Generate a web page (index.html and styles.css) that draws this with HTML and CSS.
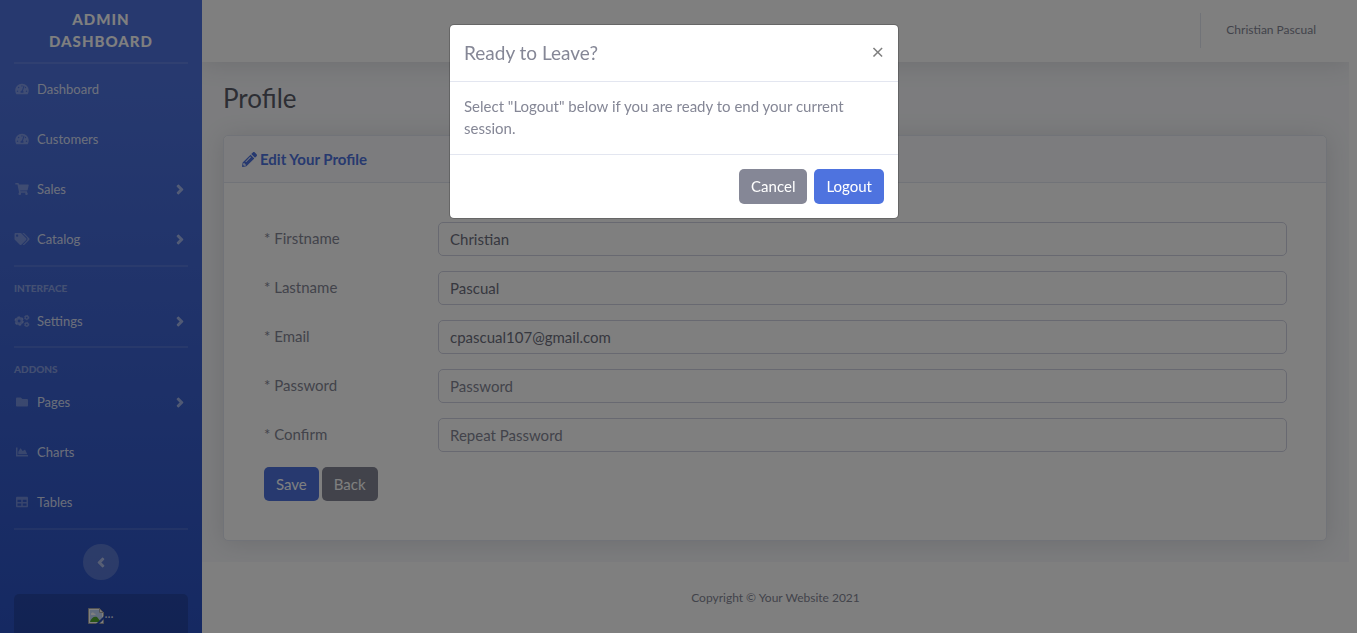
FILE: index.html
```html
<!DOCTYPE html>
<html lang="en">
<head>
<meta charset="utf-8">
<meta name="viewport" content="width=device-width, initial-scale=1">
<title>Profile</title>
<link rel="stylesheet" href="styles.css">
</head>
<body>
<svg class="sprite" aria-hidden="true">
  <symbol id="gauge" viewBox="0 0 576 512"><path d="M288 32C128.94 32 0 160.94 0 320c0 52.8 14.25 102.26 39.06 144.8 5.61 9.62 16.3 15.2 27.44 15.2h443c11.14 0 21.83-5.58 27.44-15.2C561.75 422.26 576 372.8 576 320c0-159.06-128.94-288-288-288zm0 64c14.71 0 26.58 10.13 30.32 23.65-1.11 2.26-2.64 4.23-3.45 6.67l-9.22 27.67c-5.13 3.49-10.97 6.01-17.64 6.01-17.67 0-32-14.33-32-32S270.33 96 288 96zM96 384c-17.67 0-32-14.33-32-32s14.33-32 32-32 32 14.33 32 32-14.33 32-32 32zm48-160c-17.67 0-32-14.33-32-32s14.33-32 32-32 32 14.33 32 32-14.33 32-32 32zm246.77-72.41l-61.33 184C343.13 347.33 352 364.54 352 384c0 11.72-3.38 22.55-8.88 32H232.88c-5.5-9.45-8.88-20.28-8.88-32 0-33.94 26.5-61.43 59.9-63.59l61.34-184.01c4.17-12.56 17.73-19.45 30.36-15.17 12.57 4.19 19.35 17.79 15.17 30.36zm14.66 57.2l15.52-46.55c3.47-1.29 7.13-2.23 11.05-2.23 17.67 0 32 14.33 32 32s-14.33 32-32 32c-11.38-.01-20.89-6.28-26.57-15.22zM480 384c-17.67 0-32-14.33-32-32s14.33-32 32-32 32 14.33 32 32-14.33 32-32 32z"/></symbol>
  <symbol id="cart" viewBox="0 0 576 512"><path d="M528.12 301.319l47.273-208C578.806 78.301 567.391 64 551.99 64H159.208l-9.166-44.81C147.758 8.021 137.93 0 126.529 0H24C10.745 0 0 10.745 0 24v16c0 13.255 10.745 24 24 24h69.883l70.248 343.435C147.325 417.1 136 435.222 136 456c0 30.928 25.072 56 56 56s56-25.072 56-56c0-15.674-6.447-29.835-16.824-40h209.647C430.447 426.165 424 440.326 424 456c0 30.928 25.072 56 56 56s56-25.072 56-56c0-22.172-12.888-41.332-31.579-50.405l5.517-24.276c3.413-15.018-8.002-29.319-23.403-29.319H218.117l-6.545-32h293.145c11.206 0 20.92-7.754 23.403-18.681z"/></symbol>
  <symbol id="tags" viewBox="0 0 640 512"><path d="M497.941 225.941L286.059 14.059A48 48 0 0 0 252.118 0H48C21.49 0 0 21.49 0 48v204.118a48 48 0 0 0 14.059 33.941l211.882 211.882c18.744 18.745 49.136 18.746 67.882 0l204.118-204.118c18.745-18.745 18.745-49.137 0-67.882zM112 160c-26.51 0-48-21.49-48-48s21.49-48 48-48 48 21.49 48 48-21.49 48-48 48zm513.941 133.823L421.823 497.941c-18.745 18.745-49.137 18.745-67.882 0l-.36-.36L527.64 323.522c16.999-16.999 26.36-39.6 26.36-63.64s-9.362-46.641-26.36-63.64L331.397 0h48.721a48 48 0 0 1 33.941 14.059l211.882 211.882c18.745 18.745 18.745 49.137 0 67.882z"/></symbol>
  <symbol id="cogs" viewBox="0 0 640 512"><g fill="none" stroke="currentColor"><circle cx="198" cy="256" r="116" stroke-width="108"/><circle cx="198" cy="256" r="180" stroke-width="44" stroke-dasharray="104 84.5"/><circle cx="520" cy="108" r="66" stroke-width="60"/><circle cx="520" cy="108" r="100" stroke-width="26" stroke-dasharray="56 48.7"/><circle cx="520" cy="404" r="66" stroke-width="60"/><circle cx="520" cy="404" r="100" stroke-width="26" stroke-dasharray="56 48.7"/></g></symbol>
  <symbol id="folder" viewBox="0 0 512 512"><path d="M464 128H272l-64-64H48C21.49 64 0 85.49 0 112v288c0 26.51 21.49 48 48 48h416c26.51 0 48-21.49 48-48V176c0-26.51-21.49-48-48-48z"/></symbol>
  <symbol id="area" viewBox="0 0 512 512"><path d="M500 384c6.6 0 12 5.4 12 12v40c0 6.6-5.4 12-12 12H12c-6.6 0-12-5.4-12-12V76c0-6.6 5.4-12 12-12h40c6.6 0 12 5.4 12 12v308h436zM372.7 159.5L288 216l-85.3-113.7c-5.1-6.8-15.5-6.3-19.9 1L96 248v104h384l-89.9-187.8c-3.2-6.5-11.4-8.7-17.4-4.7z"/></symbol>
  <symbol id="table" viewBox="0 0 512 512"><path d="M464 32H48C21.49 32 0 53.49 0 80v352c0 26.51 21.49 48 48 48h416c26.51 0 48-21.49 48-48V80c0-26.51-21.49-48-48-48zM224 416H64v-96h160v96zm0-160H64v-96h160v96zm224 160H288v-96h160v96zm0-160H288v-96h160v96z"/></symbol>
  <symbol id="angle" viewBox="0 0 256 512"><path stroke="currentColor" stroke-width="20" d="M224.3 273l-136 136c-9.4 9.4-24.6 9.4-33.9 0l-22.6-22.6c-9.4-9.4-9.4-24.6 0-33.9l96.4-96.4-96.4-96.4c-9.4-9.4-9.4-24.6 0-33.9L54.3 103c9.4-9.4 24.6-9.4 33.9 0l136 136c9.5 9.4 9.5 24.6.1 34z"/></symbol>
  <symbol id="pencil" viewBox="0 0 512 512"><path d="M497.9 142.1l-46.1 46.1c-4.7 4.7-12.3 4.7-17 0l-111-111c-4.7-4.7-4.7-12.3 0-17l46.1-46.1c18.7-18.7 49.1-18.7 67.9 0l60.1 60.1c18.8 18.7 18.8 49.1 0 67.9zM284.2 99.8L21.6 362.4.4 483.9c-2.9 16.4 11.4 30.6 27.8 27.8l121.5-21.3 262.6-262.6c4.7-4.7 4.7-12.3 0-17l-111-111c-4.8-4.7-12.4-4.7-17.1 0zM124.1 339.9c-5.5-5.5-5.5-14.3 0-19.8l154-154c5.5-5.5 14.3-5.5 19.8 0s5.5 14.3 0 19.8l-154 154c-5.5 5.5-14.3 5.5-19.8 0zM88 424h48v36.3l-64.5 11.3-31.1-31.1L51.7 376H88v48z"/></symbol>
</svg>

<div class="wrapper">
  <nav class="sidebar">
    <a class="brand" href="#">Admin Dashboard</a>
    <hr class="divider">
    <ul class="nav nav-main">
      <li><a class="nav-link" href="#"><svg class="icon"><use href="#gauge"/></svg><span>Dashboard</span></a></li>
      <li><a class="nav-link" href="#"><svg class="icon"><use href="#gauge"/></svg><span>Customers</span></a></li>
      <li><a class="nav-link" href="#"><svg class="icon"><use href="#cart"/></svg><span>Sales</span><svg class="arrow"><use href="#angle"/></svg></a></li>
      <li><a class="nav-link" href="#"><svg class="icon"><use href="#tags"/></svg><span>Catalog</span><svg class="arrow"><use href="#angle"/></svg></a></li>
    </ul>
    <hr class="divider">
    <div class="heading">Interface</div>
    <ul class="nav">
      <li><a class="nav-link" href="#"><svg class="icon"><use href="#cogs"/></svg><span>Settings</span><svg class="arrow"><use href="#angle"/></svg></a></li>
    </ul>
    <hr class="divider">
    <div class="heading">Addons</div>
    <ul class="nav nav-last">
      <li><a class="nav-link" href="#"><svg class="icon"><use href="#folder"/></svg><span>Pages</span><svg class="arrow"><use href="#angle"/></svg></a></li>
      <li><a class="nav-link" href="#"><svg class="icon"><use href="#area"/></svg><span>Charts</span></a></li>
      <li><a class="nav-link" href="#"><svg class="icon"><use href="#table"/></svg><span>Tables</span></a></li>
    </ul>
    <hr class="divider">
    <button class="toggle" type="button" aria-label="Collapse sidebar"><svg class="arrow arrow-left"><use href="#angle"/></svg></button>
    <div class="promo">
      <svg class="missing" viewBox="0 0 16 16" aria-hidden="true">
        <path d="M.5.5h11l4 4v11H.5z" fill="#fff" stroke="#a5a5a5"/>
        <path d="M2 2h9v3h3v9H2z" fill="#c3d9fa"/>
        <path d="M3 6c0-2 3-2 3-.5C8 5 8 7 7 7H3z" fill="#fff"/>
        <path d="M2 14c1-4 4-6 7-5l4 5z" fill="#4fa62f"/>
        <path d="M16 8L8 16h3l5-5z" fill="#2a4fb4"/>
        <path d="M11.500.5v4h4z" fill="#eee" stroke="#a5a5a5"/>
      </svg><span>...</span>
    </div>
  </nav>

  <div class="content">
    <header class="topbar">
      <a class="user" href="#">Christian Pascual</a>
    </header>
    <main class="main">
      <h1>Profile</h1>
      <section class="card">
        <h2 class="card-header"><svg class="pencil"><use href="#pencil"/></svg>Edit Your Profile</h2>
        <form class="form">
          <label for="first">* Firstname</label><input id="first" type="text" value="Christian">
          <label for="last">* Lastname</label><input id="last" type="text" value="Pascual">
          <label for="email">* Email</label><input id="email" type="email" value="cpascual107@gmail.com">
          <label for="pass">* Password</label><input id="pass" type="password" placeholder="Password">
          <label for="confirm">* Confirm</label><input id="confirm" type="password" placeholder="Repeat Password">
          <div class="actions">
            <button class="btn btn-primary" type="button">Save</button>
            <button class="btn btn-secondary" type="button">Back</button>
          </div>
        </form>
      </section>
    </main>
    <footer class="footer">Copyright © Your Website 2021</footer>
  </div>
</div>

<div class="backdrop">
  <div class="modal" role="dialog" aria-modal="true" aria-labelledby="modal-title">
    <div class="modal-header">
      <h5 id="modal-title">Ready to Leave?</h5>
      <button class="close" type="button" aria-label="Close">×</button>
    </div>
    <div class="modal-body">Select "Logout" below if you are ready to end your current session.</div>
    <div class="modal-footer">
      <button class="btn btn-secondary" type="button">Cancel</button>
      <a class="btn btn-primary" href="#">Logout</a>
    </div>
  </div>
</div>
</body>
</html>
```
FILE: styles.css
```css
* { box-sizing: border-box; }

body {
  margin: 0;
  padding-right: 8px;
  height: 100vh;
  overflow: hidden;
  background: #fff;
  color: #858796;
  font: 15px/22px Lato, "Open Sans", sans-serif;
}

a { color: inherit; text-decoration: none; }

.sprite { position: absolute; width: 0; height: 0; }

.icon, .arrow, .pencil { fill: currentColor; flex: none; }

.wrapper { display: flex; align-items: stretch; }

/* Sidebar */
.sidebar {
  flex: none;
  width: 202px;
  padding: 0 14px 60px;
  background: linear-gradient(180deg, #4e73df 10%, #224abe 100%);
}

.brand {
  display: block;
  padding: 8px 14px 10px;
  color: #fff;
  font-size: 15px;
  font-weight: 900;
  letter-spacing: 1px;
  text-align: center;
  text-transform: uppercase;
}

.divider {
  height: 2px;
  margin: 0;
  border: 0;
  background: rgba(255, 255, 255, .1);
}

.nav { margin: 0; padding: 0; list-style: none; }
.nav-main { padding-bottom: 1px; }
.nav-last { padding-bottom: 1px; }

.nav-link {
  display: flex;
  align-items: center;
  gap: 7px;
  height: 50px;
  color: rgba(255, 255, 255, .8);
  font-size: 13px;
}

.icon { width: 16px; height: 12px; color: rgba(255, 255, 255, .3); }
.arrow { width: 8px; height: 15px; margin-left: auto; margin-right: 4px; color: rgba(255, 255, 255, .5); }

.heading {
  padding: 15px 0 2px;
  color: rgba(255, 255, 255, .4);
  font-size: 10px;
  font-weight: 900;
  line-height: 12px;
  text-transform: uppercase;
}

.toggle {
  display: grid;
  place-items: center;
  width: 36px;
  height: 36px;
  margin: 14px auto 14px;
  padding: 0;
  border: 0;
  border-radius: 50%;
  background: rgba(255, 255, 255, .2);
}

.arrow-left { margin: 0; transform: rotate(180deg); }

.promo {
  display: flex;
  justify-content: center;
  align-items: flex-end;
  padding: 8px 14px 90px;
  border-radius: 5px;
  background: rgba(0, 0, 0, .15);
  color: rgba(255, 255, 255, .8);
  font-size: 13px;
}

.missing { width: 16px; height: 16px; }

/* Content */
.content { flex: 1; display: flex; flex-direction: column; min-width: 0; }

.topbar {
  display: flex;
  justify-content: flex-end;
  height: 62px;
  padding: 13px 33px 14px 14px;
  background: #fff;
  box-shadow: 0 2px 25px rgba(58, 59, 69, .15);
  clip-path: inset(0 0 -40px 0);
  position: relative;
}

.user {
  padding-left: 25px;
  border-left: 1px solid #e3e6f0;
  color: #858796;
  font-size: 12px;
  line-height: 34px;
}

.main {
  padding: 21px 22px 21px 21px;
  background: #f8f9fc;
  overflow: hidden;
}

h1 {
  margin: 0 0 22px;
  color: #5a5c69;
  font-size: 26px;
  font-weight: 400;
  line-height: 30px;
}

.card {
  border: 1px solid #e3e6f0;
  border-radius: 5px;
  background: #fff;
  box-shadow: 0 2px 25px rgba(58, 59, 69, .15);
}

.card-header {
  display: flex;
  align-items: center;
  gap: 3px;
  margin: 0;
  padding: 12px 18px;
  border-bottom: 1px solid #e3e6f0;
  border-radius: 5px 5px 0 0;
  background: #f8f9fc;
  color: #4e73df;
  font-size: 15px;
  font-weight: 700;
  line-height: 22px;
}

.pencil { width: 15px; height: 15px; }

.form {
  display: grid;
  grid-template-columns: 160px 1fr;
  gap: 15px 14px;
  padding: 39px 39px 39px 40px;
}

.form label { line-height: 32px; }

.form input {
  height: 34px;
  min-width: 0;
  padding: 0 11px;
  border: 1px solid #d1d3e2;
  border-radius: 5px;
  background: #fff;
  color: #6e707e;
  font: inherit;
}

.form input::placeholder { color: #858796; opacity: 1; }

.actions { grid-column: 1 / -1; display: flex; gap: 3px; }
.actions .btn { height: 34px; line-height: 32px; }

.btn {
  height: 35px;
  padding: 0 11px;
  border: 1px solid transparent;
  border-radius: 5px;
  color: #fff;
  font: inherit;
  line-height: 33px;
}

.btn-primary { background: #4e73df; }
.btn-secondary { background: #858796; }

.footer {
  padding: 29px 20px;
  font-size: 12px;
  line-height: 14px;
  text-align: center;
}

/* Logout dialog */
.backdrop {
  position: fixed;
  inset: 0;
  padding: 24px 9px 0 0;
  background: rgba(0, 0, 0, .5);
}

.modal {
  max-width: 450px;
  margin: 0 auto;
  border: 1px solid rgba(0, 0, 0, .2);
  border-radius: 5px;
  background: #fff;
  background-clip: padding-box;
}

.modal-header {
  display: flex;
  justify-content: space-between;
  padding: 14px;
  border-bottom: 1px solid #e3e6f0;
}

.modal-header h5 {
  margin: 0;
  font-size: 19px;
  font-weight: 400;
  line-height: 28px;
}

.close {
  height: 24px;
  padding: 0;
  border: 0;
  background: none;
  color: #7f7f7f;
  font: 22px/24px "Open Sans", sans-serif;
}

.modal-body { padding: 13px 14px 15px; }

.modal-footer {
  display: flex;
  justify-content: flex-end;
  gap: 7px;
  padding: 14px;
  border-top: 1px solid #e3e6f0;
}
```
